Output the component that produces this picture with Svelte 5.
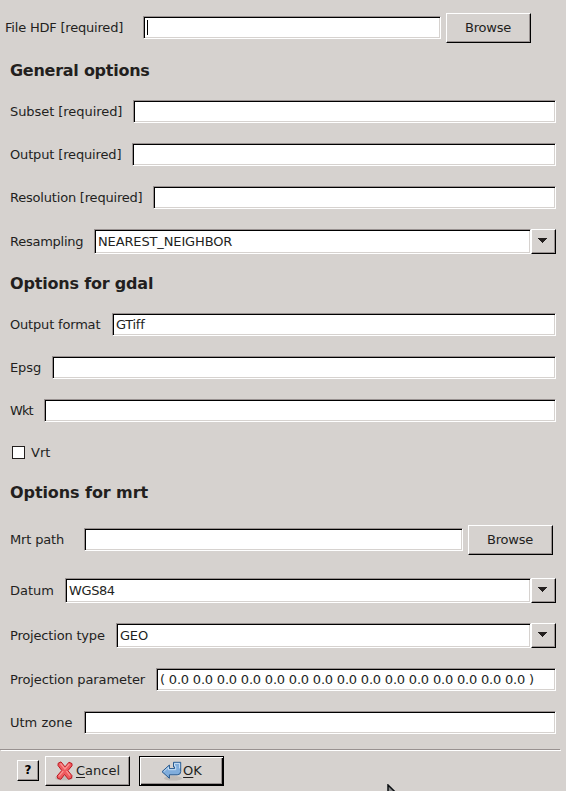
<script>
  const general = [
    { label: 'Subset [required]', w: 123, gap: 19, ls: -0.06 },
    { label: 'Output [required]', w: 122, gap: 20, ls: -0.15 },
    { label: 'Resolution [required]', w: 143, gap: 20, ls: -0.2 },
    { label: 'Resampling', w: 84, gap: 20, ls: -0.25, value: 'NEAREST_NEIGHBOR', combo: true, vs: -0.13 }
  ];
  const gdal = [
    { label: 'Output format', w: 102, gap: 19, ls: -0.18, value: 'GTiff', vs: -0.3 },
    { label: 'Epsg', w: 42, gap: 20, ls: -0.1 },
    { label: 'Wkt', w: 34, gap: 20, ls: -0.9 }
  ];
  const mrt = [
    { label: 'Datum', w: 55, gap: 23, ls: 0, value: 'WGS84', combo: true, vs: -0.4 },
    { label: 'Projection type', w: 106, gap: 20, ls: -0.18, value: 'GEO', combo: true, vs: -0.2 },
    { label: 'Projection parameter', w: 146, gap: 20, ls: -0.1, value: '( 0.0 0.0 0.0 0.0 0.0 0.0 0.0 0.0 0.0 0.0 0.0 0.0 0.0 0.0 0.0 )', vs: -0.2 },
    { label: 'Utm zone', w: 74, gap: 20, ls: 0 }
  ];
</script>

{#snippet rows(items)}
  {#each items as it}
    <div class="row" class:tall={it.combo} style:margin-top="{it.gap}px">
      <div class="label" style:width="{it.w}px"><span style:letter-spacing="{it.ls}px">{it.label}</span></div>
      <div class="field"><span style:letter-spacing="{it.vs ?? 0}px">{it.value ?? ''}</span></div>
      {#if it.combo}
        <div class="drop">
          <svg width="9" height="5" viewBox="0 0 9 5" shape-rendering="crispEdges"><path d="M0 0h9v1H8v1H7v1H6v1H5v1H4V4H3V3H2V2H1V1H0z" fill="#231f1e" /></svg>
        </div>
      {/if}
    </div>
  {/each}
{/snippet}

<main>
  <div class="row file">
    <div class="label" style:width="138px"><span>File HDF [required]</span></div>
    <div class="field"><i class="caret"></i></div>
    <div class="button browse">Browse</div>
  </div>
  <h2>General options</h2>
  {@render rows(general)}
  <h2 class="second">Options for gdal</h2>
  {@render rows(gdal)}
  <div class="check"><i></i><span>Vrt</span></div>
  <h2 class="third">Options for mrt</h2>
  <div class="row path">
    <div class="label" style:width="74px"><span>Mrt path</span></div>
    <div class="field"></div>
    <div class="button browse">Browse</div>
  </div>
  {@render rows(mrt)}
  <div class="rule"></div>
  <footer>
    <div class="help">?</div>
    <div class="button act cancel">
      <svg width="20" height="20" viewBox="0 0 20 20">
        <ellipse cx="9" cy="17" rx="9" ry="2.3" fill="#aaa5a2" opacity=".5" />
        <path d="M3.2 2.2 6 .9l4 5L14 1.2l3 1.4v2.2L12.9 9.7l4.1 5-.5 2.5-3 1.1-4-4.8-3.7 4.8-3-.8-.8-2.4 4.8-5.6-3.8-5z" fill="#ef5b5f" stroke="#bd1720" stroke-linejoin="round" />
        <path d="M5.5 2.5 9.9 8l4.4-5M8.2 10l-4.5 5.4M11.5 10l3.4 4.5" fill="none" stroke="#fa9290" stroke-width="1.3" />
      </svg>
      <span><u>C</u>ancel</span>
    </div>
    <div class="button act ok">
      <svg width="22" height="20" viewBox="0 0 22 20">
        <ellipse cx="12" cy="17.3" rx="9" ry="2.3" fill="#aaa5a2" opacity=".5" />
        <path d="M1 10.7 8.4 4v3.6h5.2V6h-1.1V1.3h7.2v9.2q0 3.3-3.5 3.3H8.4v3.5z" fill="#80addc" stroke="#27598f" stroke-linejoin="round" />
        <path d="M2.7 10.6 7.5 6.2v2.5h7.2V5h-1.2V2.4h5.1v5" fill="none" stroke="#c8dff4" />
      </svg>
      <span><u>O</u>K</span>
    </div>
    <svg class="pointer" width="13" height="20" viewBox="0 0 13 20"><path d="M1 1v16l4-4 2.6 6 2.4-1-2.6-5.8h5z" fill="#8a8a8a" stroke="#0b0f12" stroke-width="1.5" /></svg>
  </footer>
</main>

<style>
  :global(body) { background: #d6d2cf; }
  main {
    box-sizing: border-box;
    width: 566px;
    height: 791px;
    overflow: hidden;
    padding-top: 13px;
    background: #d6d2cf;
    color: #231f1e;
    font: 13px/17px "DejaVu Sans", sans-serif;
  }
  .row { display: flex; align-items: stretch; height: 23px; padding: 0 10px; }
  .row.tall { height: 25px; }
  .file, .path { height: 30px; align-items: flex-start; }
  .file { padding: 0 35px 0 5px; }
  .path { padding-right: 13px; margin-top: 22px; }
  .label { flex: none; display: flex; align-items: center; white-space: pre; }
  .file .label { letter-spacing: -0.2px; }
  .path .label { letter-spacing: -0.15px; }
  .field {
    box-sizing: border-box;
    flex: 1;
    min-width: 0;
    display: flex;
    align-items: center;
    height: 100%;
    background: #fff;
    border: 1px solid;
    border-color: #989190 #fff #fff #989190;
    box-shadow: inset 1px 1px #000, inset -1px -1px #d6d2cf;
    padding-left: 3px;
    white-space: pre;
    overflow: hidden;
  }
  .file .field, .path .field, .file .label, .path .label { height: 23px; margin-top: 3px; }
  .caret { width: 1px; height: 15px; background: #000; }
  .button, .drop, .help {
    box-sizing: border-box;
    flex: none;
    display: flex;
    align-items: center;
    justify-content: center;
    border: 1px solid;
    border-color: #fff #000 #000 #fff;
    box-shadow: inset -1px -1px #989190;
  }
  .button { width: 85px; height: 30px; margin-left: 5px; padding-bottom: 1px; }
  .browse { letter-spacing: -0.2px; padding-right: 1px; }
  .drop { width: 25px; }
  .drop svg { margin: 0 2px 2px 0; }
  h2 { margin: 18px 0 0 10px; font-size: 16px; line-height: 20px; letter-spacing: -0.26px; white-space: pre; }
  h2.second { margin-top: 20px; letter-spacing: -0.19px; }
  h2.third { margin-top: 22px; letter-spacing: -0.08px; }
  .check { display: flex; align-items: center; height: 17px; margin: 22px 0 0 12px; }
  .check i { box-sizing: border-box; width: 13px; height: 13px; border: 1px solid #231f1e; background: #fff; margin-right: 6px; }
  .rule { width: 560px; height: 1px; margin-top: 15px; background: #989190; box-shadow: 1px 1px #fff; }
  footer { display: flex; align-items: flex-start; height: 30px; margin-top: 6px; padding-left: 17px; position: relative; }
  .help { width: 22px; height: 21px; margin-top: 4px; font-weight: bold; font-size: 12px; color: #000; }
  .act { margin-left: 6px; padding-bottom: 2px; }
  .cancel svg { margin-right: 1px; }
  .cancel svg, .ok svg { position: relative; top: 1px; }
  .ok { margin-left: 9px; border: 1px solid #000; box-shadow: inset 1px 1px #fff, inset -1px -1px #000, inset -2px -2px #989190; }
  .pointer { position: absolute; left: 387px; top: 28px; }
  u { text-underline-offset: 2px; }
</style>
